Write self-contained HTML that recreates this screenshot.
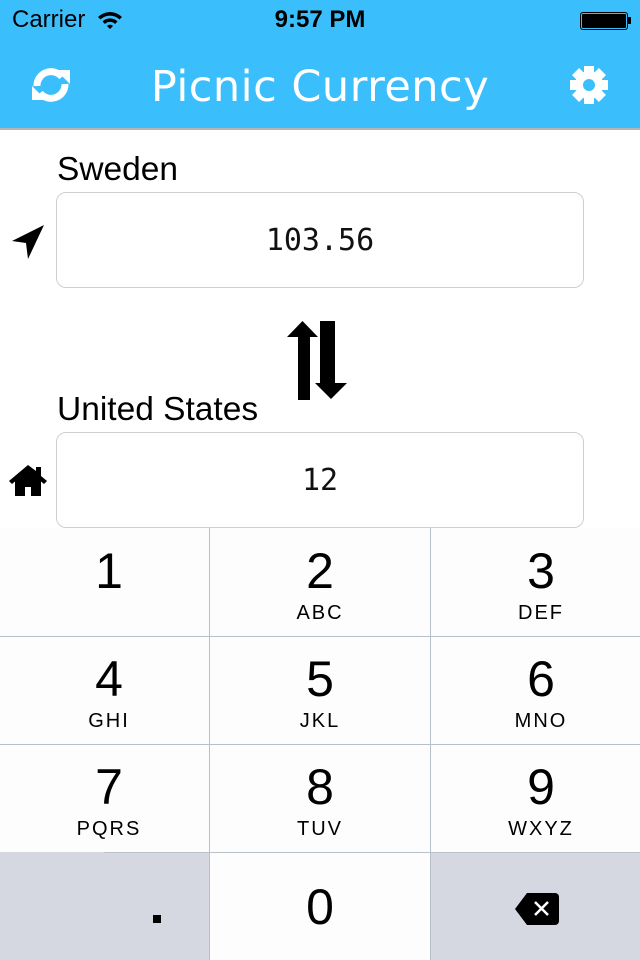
<!DOCTYPE html>
<html><head><style>
body{margin:0;width:640px;height:960px;position:relative;background:#fff;font-family:"Liberation Sans",sans-serif;overflow:hidden}
.hdr{position:absolute;left:0;top:0;width:640px;height:128px;background:#3bbffc;border-bottom:2px solid #b4b4b4}
.abs{position:absolute}
.field{position:absolute;left:56px;width:526px;height:94px;border:1px solid #cfcfcf;border-radius:10px;background:#fff;text-align:center;line-height:96px;font-family:"DejaVu Sans Mono","Liberation Mono",monospace;font-size:30px;color:#111}
.lbl{position:absolute;left:57px;font-size:33.5px;color:#000}
.key{position:absolute;height:108px;text-align:center;color:#000;box-sizing:border-box}
.key .n{font-size:50px;line-height:50px;padding-top:18px}
.key .l{font-size:20px;letter-spacing:2px;margin-top:6px}
</style></head><body>
<div class="hdr">
 <div class="abs" style="left:12px;top:6px;font-size:24px;color:#000">Carrier</div>
 <svg class="abs" style="left:96px;top:10px" width="28" height="20" viewBox="0 0 28 20"><path d="M2 7a17 17 0 0 1 24 0l-2.5 2.5a13.5 13.5 0 0 0-19 0z M6.5 11.5a10.5 10.5 0 0 1 15 0l-2.5 2.5a7 7 0 0 0-10 0z M11 16a4 4 0 0 1 6 0l-3 3z" fill="#000"/></svg>
 <div class="abs" style="left:0;width:640px;top:6px;text-align:center;font-size:24px;font-weight:bold">9:57 PM</div>
 <div class="abs" style="left:580px;top:12px;width:46px;height:16px;border:1px solid #000;border-radius:3px;background:#000;box-shadow:inset 0 0 0 1px #3bbffc"></div>
 <div class="abs" style="left:628px;top:17px;width:3px;height:7px;background:#000"></div>
 <div class="abs" style="left:0;width:640px;top:62px;text-align:center;font-family:'DejaVu Sans',sans-serif;font-size:43px;color:#fff;letter-spacing:0.5px">Picnic Currency</div>
 <svg class="abs" style="left:30px;top:66px" width="42" height="38" viewBox="0 0 42 38"><g fill="none" stroke="#fff" stroke-width="7"><path d="M7 20A14 14 0 0 1 32 11"/><path d="M35 18A14 14 0 0 1 10 27"/></g><path d="M26 4h14v14z" fill="#fff"/><path d="M16 34H2V20z" fill="#fff"/></svg>
 <svg class="abs" style="left:569px;top:65px" width="40" height="40" viewBox="-20 -20 40 40"><g fill="#fff"><circle r="14"/><rect x="-5" y="-19" width="10" height="38"/><rect x="-5" y="-19" width="10" height="38" transform="rotate(45)"/><rect x="-5" y="-19" width="10" height="38" transform="rotate(90)"/><rect x="-5" y="-19" width="10" height="38" transform="rotate(135)"/></g><circle r="6" fill="#3bbffc"/></svg>
</div>
<div class="lbl" style="top:151px">Sweden</div>
<svg class="abs" style="left:10px;top:223px" width="36" height="36" viewBox="0 0 36 36"><path d="M34 2L2 18l14 2 2 16z" fill="#000"/></svg>
<div class="field" style="top:192px">103.56</div>
<svg class="abs" style="left:286px;top:320px" width="64" height="82" viewBox="286 320 64 82"><path d="M287 337L302.5 321 318 337h-8v63h-12V337z" fill="#000"/><path d="M315 383h5v-62h15v62h12L331 399z" fill="#000"/></svg>
<div class="lbl" style="top:391px">United States</div>
<svg class="abs" style="left:8px;top:463px" width="40" height="34" viewBox="0 0 40 34"><path d="M20 2L1 18l3 3 3-2.5V33h10v-9h6v9h10V18.5l3 2.5 3-3-6-5V4h-5v4z" fill="#000"/></svg>
<div class="field" style="top:432px">12</div>

<div class="abs" style="left:0;top:528px;width:640px;height:432px;background:#fdfdfd"></div>
<div class="abs" style="left:0;top:852px;width:209px;height:108px;background:#d5d8e0"></div>
<div class="abs" style="left:431px;top:852px;width:209px;height:108px;background:#d5d8e0"></div>
<div class="abs" style="left:209px;top:528px;width:1px;height:432px;background:#b8c0ca"></div>
<div class="abs" style="left:430px;top:528px;width:1px;height:432px;background:#b8c0ca"></div>
<div class="abs" style="left:0;top:636px;width:640px;height:1px;background:#b8c0ca"></div>
<div class="abs" style="left:0;top:744px;width:640px;height:1px;background:#b8c0ca"></div>
<div class="abs" style="left:104px;top:852px;width:536px;height:1px;background:#b8c0ca"></div>

<div class="key" style="left:0;top:528px;width:218px"><div class="n">1</div></div>
<div class="key" style="left:210px;top:528px;width:220px"><div class="n">2</div><div class="l">ABC</div></div>
<div class="key" style="left:431px;top:528px;width:220px"><div class="n">3</div><div class="l">DEF</div></div>
<div class="key" style="left:0;top:636px;width:218px"><div class="n">4</div><div class="l">GHI</div></div>
<div class="key" style="left:210px;top:636px;width:220px"><div class="n">5</div><div class="l">JKL</div></div>
<div class="key" style="left:431px;top:636px;width:220px"><div class="n">6</div><div class="l">MNO</div></div>
<div class="key" style="left:0;top:744px;width:218px"><div class="n">7</div><div class="l">PQRS</div></div>
<div class="key" style="left:210px;top:744px;width:220px"><div class="n">8</div><div class="l">TUV</div></div>
<div class="key" style="left:431px;top:744px;width:220px"><div class="n">9</div><div class="l">WXYZ</div></div>
<div class="abs" style="left:153px;top:915px;width:8px;height:8px;background:#000"></div>
<div class="key" style="left:210px;top:852px;width:220px"><div class="n" style="padding-top:30px">0</div></div>
<svg class="abs" style="left:514px;top:892px" width="45" height="34" viewBox="0 0 45 34"><path d="M13 1h28a4 4 0 0 1 4 4v24a4 4 0 0 1-4 4H13L1 17z" fill="#000"/><path d="M21 10l13 13M34 10L21 23" stroke="#fff" stroke-width="2.5"/></svg>
</body></html>
